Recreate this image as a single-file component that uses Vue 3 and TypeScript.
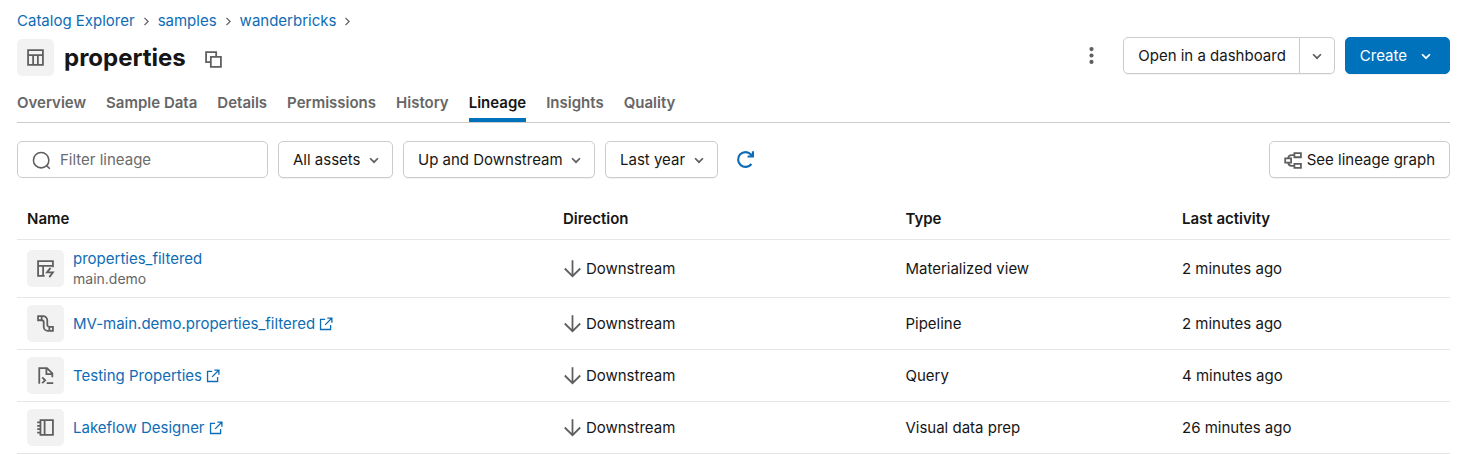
<script setup lang="ts">
import { ref } from 'vue'

interface Crumb {
  label: string
}

interface AssetRow {
  icon: 'view' | 'pipeline' | 'query' | 'designer'
  name: string
  path?: string
  external: boolean
  type: string
  activity: string
}

const crumbs: Crumb[] = [
  { label: 'Catalog Explorer' },
  { label: 'samples' },
  { label: 'wanderbricks' },
]

const tabs: string[] = [
  'Overview',
  'Sample Data',
  'Details',
  'Permissions',
  'History',
  'Lineage',
  'Insights',
  'Quality',
]
const activeTab = ref('Lineage')
const filterText = ref('')

const filters = ref([
  { id: 'assets', label: 'Asset kind', value: 'All assets' },
  { id: 'direction', label: 'Lineage direction', value: 'Up and Downstream' },
  { id: 'period', label: 'Period', value: 'Last year' },
])

const rows: AssetRow[] = [
  { icon: 'view', name: 'properties_filtered', path: 'main.demo', external: false, type: 'Materialized view', activity: '2 minutes ago' },
  { icon: 'pipeline', name: 'MV-main.demo.properties_filtered', external: true, type: 'Pipeline', activity: '2 minutes ago' },
  { icon: 'query', name: 'Testing Properties', external: true, type: 'Query', activity: '4 minutes ago' },
  { icon: 'designer', name: 'Lakeflow Designer', external: true, type: 'Visual data prep', activity: '26 minutes ago' },
]
</script>

<template>
  <main class="page">
    <nav class="crumbs" aria-label="Breadcrumb">
      <template v-for="crumb in crumbs" :key="crumb.label">
        <a href="#">{{ crumb.label }}</a>
        <svg class="crumb-sep" viewBox="0 0 16 16" aria-hidden="true"><path d="M5.5 3.5 10 8l-4.5 4.5" /></svg>
      </template>
    </nav>

    <header class="title-row">
      <span class="tile">
        <svg class="icon" viewBox="0 0 16 16" aria-hidden="true"><path d="M1.75 1.75h12.5v12.5H1.75zM1.75 6h12.5M6 6v8.25M10 6v8.25" /></svg>
      </span>
      <h1>properties</h1>
      <button class="icon-button copy" type="button" aria-label="Copy name">
        <svg class="icon" viewBox="0 0 16 16" aria-hidden="true"><path d="M5.75 5.75h8.5v8.5h-8.5zM5.75 10.25h-4v-8.5h8.5v4" /></svg>
      </button>
      <div class="actions">
        <button class="icon-button kebab" type="button" aria-label="More actions">
          <svg class="icon" viewBox="0 0 16 16" aria-hidden="true">
            <circle class="solid" cx="8" cy="2.6" r="1.75" />
            <circle class="solid" cx="8" cy="8" r="1.75" />
            <circle class="solid" cx="8" cy="13.4" r="1.75" />
          </svg>
        </button>
        <div class="split">
          <button class="button split-main" type="button">Open in a dashboard</button>
          <button class="button split-more" type="button" aria-label="More open options">
            <svg class="chevron" viewBox="0 0 16 16" aria-hidden="true"><path d="M3.5 6 8 10.5 12.5 6" /></svg>
          </button>
        </div>
        <button class="button primary" type="button">
          Create
          <svg class="chevron" viewBox="0 0 16 16" aria-hidden="true"><path d="M3.5 6 8 10.5 12.5 6" /></svg>
        </button>
      </div>
    </header>

    <div class="tabs" role="tablist">
      <button
        v-for="tab in tabs"
        :key="tab"
        class="tab"
        :class="{ active: tab === activeTab }"
        type="button"
        role="tab"
        :aria-selected="tab === activeTab"
        @click="activeTab = tab"
      >{{ tab }}</button>
    </div>

    <div class="toolbar">
      <label class="search">
        <svg class="icon search-icon" viewBox="0 0 16 16" aria-hidden="true"><circle cx="7.7" cy="7.7" r="6.5" /><path d="m12.3 12.3 2.7 2.7" /></svg>
        <input v-model="filterText" type="text" placeholder="Filter lineage" aria-label="Filter lineage" />
      </label>
      <div v-for="filter in filters" :key="filter.id" class="drop">
        <select v-model="filter.value" :aria-label="filter.label">
          <option>{{ filter.value }}</option>
        </select>
        <svg class="chevron" viewBox="0 0 16 16" aria-hidden="true"><path d="M3.5 6 8 10.5 12.5 6" /></svg>
      </div>
      <button class="icon-button refresh" type="button" aria-label="Refresh">
        <svg class="icon" viewBox="0 0 16 16" aria-hidden="true"><path d="M13 11.8A6.25 6.25 0 1 1 12.6 3.7L14.2 5.3M14.25 1v4.5H9.75" /></svg>
      </button>
      <button class="button graph" type="button">
        <svg class="icon" viewBox="0 0 16 16" aria-hidden="true"><path d="M8.75 1.75h5.5v3.5h-5.5zM8.75 10.75h5.5v3.5h-5.5zM1 6.25h5v3.5H1zM8.75 3.5H6.5A3 3 0 0 0 3.5 6.25M3.5 9.75a3 3 0 0 0 3 2.75h2.25" /></svg>
        See lineage graph
      </button>
    </div>

    <table>
      <thead>
        <tr>
          <th class="col-name" scope="col">Name</th>
          <th class="col-direction" scope="col">Direction</th>
          <th class="col-type" scope="col">Type</th>
          <th class="col-activity" scope="col">Last activity</th>
        </tr>
      </thead>
      <tbody>
        <tr v-for="row in rows" :key="row.name" :class="{ tall: row.path }">
          <td>
            <div class="asset">
              <span class="tile">
                <svg class="icon" viewBox="0 0 16 16" aria-hidden="true">
                  <path v-if="row.icon === 'view'" d="M7.25 14.25h-5.5V1.75h12.5V7M1.75 5.75h12.5M6 5.75v8.5M12.25 7.5 9.25 11.25h5L11.25 15.25" />
                  <path v-else-if="row.icon === 'pipeline'" d="M1.75 1.75h3v3.5h-3zM11.25 10.75h3v3.5h-3zM4.75 1.75H6a3.5 3.5 0 0 1 3.5 3.5v3.75a1.75 1.75 0 0 0 1.75 1.75M4.75 5.25A1.75 1.75 0 0 1 6.5 7v3.75a3.5 3.5 0 0 0 3.5 3.5h1.25" />
                  <path v-else-if="row.icon === 'query'" d="M2.75 15V1.75h6.5l4.5 4.5V9.5M8.75 1.75v5h5M5.25 9.5l2.5 2.5-2.5 2.5M9 14.5h5.5" />
                  <path v-else d="M3.75 1.75h10.5v12.5H3.75zM7.25 1.75v12.5M1 3.75h2.75M1 6.6h2.75M1 9.4h2.75M1 12.25h2.75" />
                </svg>
              </span>
              <div class="asset-text">
                <a href="#">
                  {{ row.name }}
                  <svg v-if="row.external" class="external" viewBox="0 0 16 16" aria-hidden="true"><path d="M7 2.75H1.75v11.5h11.5V9M9.5 1.25h5.25V6.5M14.5 1.5 7 9" /></svg>
                </a>
                <span v-if="row.path" class="path">{{ row.path }}</span>
              </div>
            </div>
          </td>
          <td>
            <span class="direction">
              <svg class="icon" viewBox="0 0 16 16" aria-hidden="true"><path d="M8 1v13.25M1.5 8 8 14.5 14.5 8" /></svg>
              Downstream
            </span>
          </td>
          <td>{{ row.type }}</td>
          <td>{{ row.activity }}</td>
        </tr>
      </tbody>
    </table>
  </main>
</template>

<style>
body {
  background: #fff;
}
</style>

<style scoped>
.page {
  box-sizing: border-box;
  padding: 11px 18px 0 17px;
  font-family: Inter, "Liberation Sans", sans-serif;
  font-size: 15px;
  line-height: 20px;
  color: #161616;
}

a {
  color: #0e6cb5;
  text-decoration: none;
}

svg {
  flex: none;
  fill: none;
  stroke: currentColor;
  stroke-width: 1.5;
}

button,
input,
select {
  font: inherit;
  color: inherit;
}

button,
select {
  cursor: pointer;
}

.icon {
  width: 19px;
  height: 19px;
}

.solid {
  fill: currentColor;
  stroke: none;
}

.chevron {
  width: 14px;
  height: 14px;
  stroke-width: 2;
  color: #5f5f5f;
}

.crumbs {
  display: flex;
  align-items: center;
  gap: 5px;
}

.crumb-sep {
  width: 13px;
  height: 13px;
  color: #5f5f5f;
}

.title-row {
  display: flex;
  align-items: center;
  margin-top: 6px;
  height: 41px;
}

.tile {
  display: flex;
  flex: none;
  align-items: center;
  justify-content: center;
  width: 37px;
  height: 37px;
  border-radius: 5px;
  background: #f2f2f2;
  color: #5f5f5f;
}

h1 {
  margin: 0 10px;
  font-size: 24px;
  line-height: 32px;
  font-weight: 700;
}

.icon-button {
  display: flex;
  align-items: center;
  justify-content: center;
  padding: 0 8px;
  height: 37px;
  border: 0;
  background: none;
  color: #5f5f5f;
}

.copy {
  align-items: flex-end;
  padding-bottom: 7px;
}

.actions {
  display: flex;
  align-self: flex-start;
  gap: 10px;
  margin-left: auto;
}

.kebab {
  margin-right: 4px;
}

.button {
  display: flex;
  align-items: center;
  box-sizing: border-box;
  height: 37px;
  padding: 1px 14px 0;
  border: 1px solid #cbcbcb;
  border-radius: 5px;
  background: #fff;
  box-shadow: 0 1px 0 rgb(0 0 0 / 5%);
  white-space: nowrap;
}

.split {
  display: flex;
}

.split-main {
  padding: 1px 13px 0 14px;
  border-radius: 5px 0 0 5px;
}

.split-more {
  padding: 0 10px;
  border-left: 0;
  border-radius: 0 5px 5px 0;
}

.primary {
  gap: 12px;
  padding: 1px 16px 0 14px;
  border-color: #0072bc;
  background: #0072bc;
  color: #fff;
}

.primary .chevron {
  color: #fff;
}

.tabs {
  display: flex;
  gap: 20px;
  margin-top: 5px;
  border-bottom: 1px solid #cbcbcb;
}

.tab {
  padding: 10px 0 5px;
  border: 0;
  border-bottom: 4px solid transparent;
  background: none;
  color: #666;
  font-weight: 600;
}

.tab.active {
  border-color: #0072bc;
  color: #161616;
}

.toolbar {
  display: flex;
  align-items: center;
  gap: 10px;
  margin-top: 18px;
}

.search {
  display: flex;
  align-items: center;
  box-sizing: border-box;
  width: 251px;
  height: 37px;
  padding: 1px 14px 0;
  gap: 9px;
  border: 1px solid #cbcbcb;
  border-radius: 5px;
}

.search-icon {
  color: #5f5f5f;
  stroke-width: 1.3;
}

.search input {
  flex: 1;
  min-width: 0;
  padding: 0;
  border: 0;
  outline: 0;
  background: none;
}

.search input::placeholder {
  color: #6b6b6b;
  opacity: 1;
}

.drop {
  display: grid;
  align-items: center;
}

.drop select,
.drop .chevron {
  grid-area: 1 / 1;
}

.drop select {
  appearance: none;
  box-sizing: border-box;
  height: 37px;
  padding: 1px 31px 0 14px;
  border: 1px solid #cbcbcb;
  border-radius: 5px;
  background: #fff;
  box-shadow: 0 1px 0 rgb(0 0 0 / 5%);
}

.drop .chevron {
  justify-self: end;
  margin-right: 12px;
  pointer-events: none;
}

.refresh {
  color: #0e6cb5;
}

.refresh .icon {
  stroke-width: 1.8;
}

.graph {
  gap: 4px;
  margin-left: auto;
}

.graph .icon {
  color: #5f5f5f;
}

table {
  width: 100%;
  margin-top: 19px;
  border-collapse: separate;
  border-spacing: 0;
  table-layout: fixed;
}

th,
td {
  box-sizing: border-box;
  height: 52px;
  padding: 0 10px;
  border-bottom: 1px solid #e6e6e6;
  text-align: left;
  vertical-align: middle;
}

th {
  height: 43px;
  padding-top: 2px;
  font-weight: 600;
}

.tall td {
  height: 58px;
}

.col-name {
  width: 37.4%;
}

.col-direction {
  width: 23.9%;
}

.col-type {
  width: 19.3%;
}

.col-activity {
  width: 19.4%;
}

.asset {
  display: flex;
  align-items: center;
  gap: 9px;
}

.asset-text {
  display: flex;
  flex-direction: column;
}

.asset-text a {
  display: flex;
  align-items: center;
  gap: 4px;
}

.external {
  width: 14px;
  height: 14px;
}

.path {
  font-size: 14px;
  color: #666;
}

.direction {
  display: flex;
  align-items: center;
  gap: 4px;
}

.direction .icon {
  color: #5f5f5f;
}
</style>
